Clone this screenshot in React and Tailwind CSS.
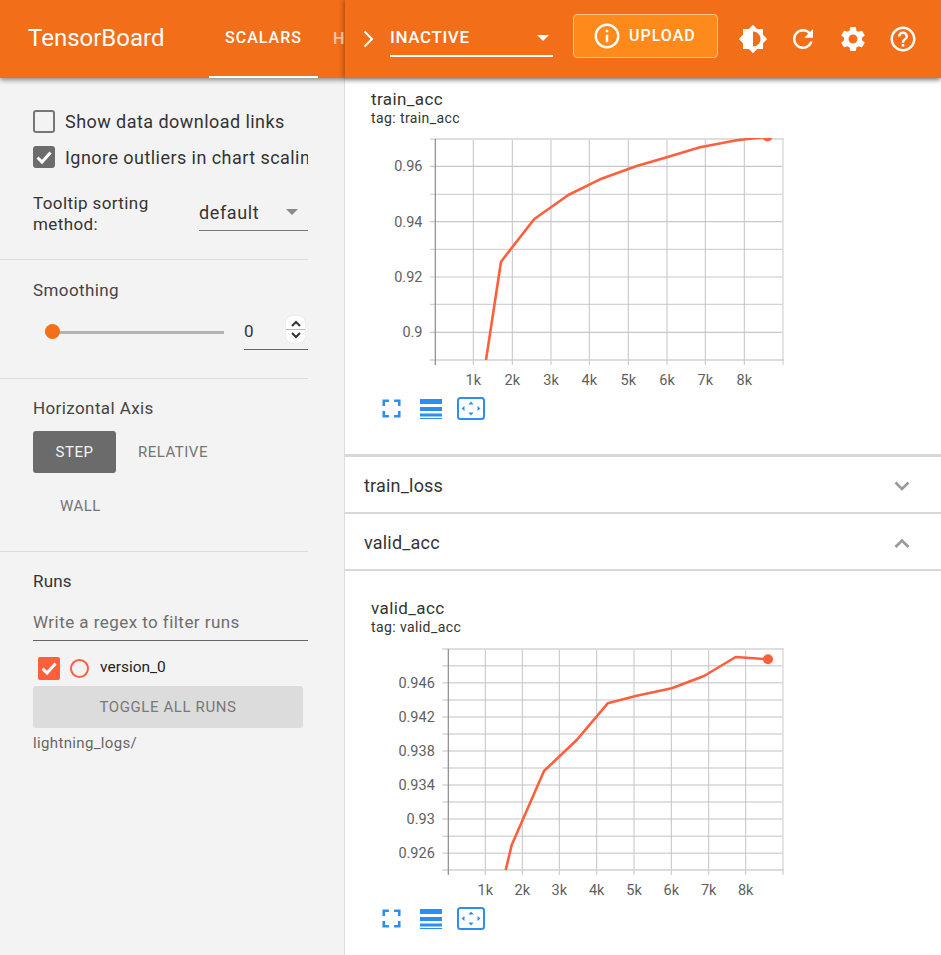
import React from "react";

const I = ({ d, size = 30, className = "" }) => (
  <svg width={size} height={size} viewBox="0 0 24 24" fill="currentColor" className={"block shrink-0 " + className}>
    <path d={d} />
  </svg>
);

const P = {
  info: "M11 17h2v-6h-2v6zm1-15C6.48 2 2 6.48 2 12s4.48 10 10 10 10-4.48 10-10S17.52 2 12 2zm0 18c-4.41 0-8-3.59-8-8s3.59-8 8-8 8 3.59 8 8-3.59 8-8 8zM11 9h2V7h-2v2z",
  bright: "M20 15.31L23.31 12 20 8.69V4h-4.69L12 .69 8.69 4H4v4.69L.69 12 4 15.31V20h4.69L12 23.31 15.31 20H20v-4.69zM12 18V6c3.31 0 6 2.69 6 6s-2.69 6-6 6z",
  refresh: "M17.65 6.35C16.2 4.9 14.21 4 12 4c-4.42 0-7.99 3.58-7.99 8s3.57 8 7.99 8c3.73 0 6.84-2.55 7.73-6h-2.08c-.82 2.33-3.04 4-5.65 4-3.31 0-6-2.69-6-6s2.69-6 6-6c1.66 0 3.14.69 4.22 1.78L13 11h7V4l-2.35 2.35z",
  settings: "M19.14 12.94c.04-.3.06-.61.06-.94 0-.32-.02-.64-.07-.94l2.03-1.58c.18-.14.23-.41.12-.61l-1.92-3.32c-.12-.22-.37-.29-.59-.22l-2.39.96c-.5-.38-1.03-.7-1.62-.94l-.36-2.54c-.04-.24-.24-.41-.48-.41h-3.84c-.24 0-.43.17-.47.41l-.36 2.54c-.59.24-1.13.57-1.62.94l-2.39-.96c-.22-.08-.47 0-.59.22L2.74 8.87c-.12.21-.08.47.12.61l2.03 1.58c-.05.3-.09.63-.09.94s.02.64.07.94l-2.03 1.58c-.18.14-.23.41-.12.61l1.92 3.32c.12.22.37.29.59.22l2.39-.96c.5.38 1.03.7 1.62.94l.36 2.54c.05.24.24.41.48.41h3.84c.24 0 .44-.17.47-.41l.36-2.54c.59-.24 1.13-.56 1.62-.94l2.39.96c.22.08.47 0 .59-.22l1.92-3.32c.12-.22.07-.47-.12-.61l-2.01-1.58zM12 15.6c-1.98 0-3.6-1.62-3.6-3.6s1.62-3.6 3.6-3.6 3.6 1.62 3.6 3.6-1.62 3.6-3.6 3.6z",
  help: "M11 18h2v-2h-2v2zm1-16C6.48 2 2 6.48 2 12s4.48 10 10 10 10-4.48 10-10S17.52 2 12 2zm0 18c-4.41 0-8-3.59-8-8s3.59-8 8-8 8 3.59 8 8-3.59 8-8 8zm0-14c-2.21 0-4 1.79-4 4h2c0-1.1.9-2 2-2s2 .9 2 2c0 2-3 1.75-3 5h2c0-2.25 3-2.5 3-5 0-2.21-1.79-4-4-4z",
  full: "M7 14H5v5h5v-2H7v-3zm-2-4h2V7h3V5H5v5zm12 7h-3v2h5v-5h-2v3zM14 5v2h3v3h2V5h-5z",
};

const Check = () => (
  <svg width="22" height="22" viewBox="0 0 22 22" className="block">
    <path d="M4.5 11.5l4.5 4.5 8.5-9.5" fill="none" stroke="#fff" strokeWidth="3" />
  </svg>
);

const chart1 = {
  top: 139, bottom: 360, left: 435.3, tickLeft: 430, right: 783,
  xs: [[473.3, "1k"], [512.3, "2k"], [551, "3k"], [589.3, "4k"], [628.3, "5k"], [667, "6k"], [705.3, "7k"], [744.3, "8k"]],
  ys: [[166.3, "0.96"], [194.3], [221.7, "0.94"], [249.3], [277, "0.92"], [304.3], [332.3, "0.9"]],
  thick: false,
  line: "486,360 501,261.7 534.3,219 568.3,195 600,179.3 636.7,166 666.7,157.3 700,147.3 736.7,140.3 766.7,137",
  dot: [767.5, 136.5],
};
const chart2 = {
  top: 649, bottom: 870, left: 448.3, tickLeft: 442.3, right: 783,
  xs: [[485.3, "1k"], [522.3, "2k"], [559.3, "3k"], [596.7, "4k"], [634, "5k"], [671.3, "6k"], [708.7, "7k"], [745.7, "8k"]],
  ys: [[665.7], [682.7, "0.946"], [700], [717, "0.942"], [734], [751, "0.938"], [768], [785, "0.934"], [802], [819, "0.93"], [836.3], [853.3, "0.926"]],
  thick: true,
  line: "505.7,870 511.7,845 544,771 576.7,740 607.7,703.3 636.7,695.7 671.7,688.3 704,676 735.7,657 768,659.3",
  dot: [768, 659.3],
};

const Chart = ({ c }) => {
  const clip = "clip" + c.top;
  return (
    <svg width="420" height="259" viewBox={`371 ${c.top - 5} 420 259`} className="block" style={{ fontFamily: "Roboto, sans-serif" }}>
      <defs>
        <clipPath id={clip}>
          <rect x={c.left} y={c.top - 1} width={c.right - c.left} height={c.bottom - c.top + 1} />
        </clipPath>
      </defs>
      {c.ys.map(([y, l], i) => (
        <g key={i}>
          <line x1={c.tickLeft} x2={c.right} y1={y} y2={y} stroke={c.thick ? "#d6d6d6" : "#c8c8c8"} strokeWidth={c.thick ? (l ? 1.6 : 1.4) : l ? 1.2 : 1} />
          {l && <text x={c.tickLeft - 7.5} y={y + 5} textAnchor="end" fontSize="14.5" fill="#5f5f5f">{l}</text>}
        </g>
      ))}
      {c.xs.map(([x, l], i) => (
        <g key={i}>
          <line x1={x} x2={x} y1={c.top} y2={c.bottom + 5} stroke="#c4c4c4" strokeWidth="1" />
          <text x={x} y={c.bottom + 25} textAnchor="middle" fontSize="14.5" fill="#5f5f5f">{l}</text>
        </g>
      ))}
      <line x1={c.tickLeft} x2={c.right + 1} y1={c.top} y2={c.top} stroke="#dedede" strokeWidth="2" />
      <line x1={c.right} x2={c.right} y1={c.top} y2={c.bottom + 5} stroke="#dedede" strokeWidth="1.6" />
      <line x1={c.tickLeft} x2={c.right + 1} y1={c.bottom} y2={c.bottom} stroke="#d0d0d0" strokeWidth="1.6" />
      <line x1={c.left} x2={c.left} y1={c.top} y2={c.bottom + 5} stroke="#8a8a8a" strokeWidth="1.2" />
      <g clipPath={`url(#${clip})`}>
        <polyline points={c.line} fill="none" stroke="#ff5f3c" strokeWidth="2.6" strokeLinejoin="round" />
        <circle cx={c.dot[0]} cy={c.dot[1]} r="5" fill="#ff5f3c" />
      </g>
    </svg>
  );
};

const ChartButtons = () => (
  <div className="flex items-center text-[#2b8ff0]">
    <I d={P.full} size={31} className="ml-[4.5px]" />
    <svg width="22" height="20" viewBox="0 0 22 20" className="block ml-[13.5px]" fill="currentColor">
      <rect x="0" y="0" width="22" height="5" />
      <rect x="0" y="8" width="22" height="4" />
      <rect x="0" y="14.5" width="22" height="3" />
      <rect x="0" y="19" width="22" height="1" />
    </svg>
    <svg width="28" height="23" viewBox="0 0 28 23" className="block ml-[15px]" fill="currentColor">
      <rect x="1" y="1" width="26" height="21" rx="2.5" fill="none" stroke="currentColor" strokeWidth="2" />
      <path d="M14 4.500l2.600 3h-5.200zM14 18.500l-2.600-3h5.200zM4.500 11.500l3-2.600v5.200zM23.500 11.500l-3 2.600v-5.200z" />
    </svg>
  </div>
);

const ChartCard = ({ title, c, tagClass }) => (
  <div className="bg-white pl-[26px]">
    <div className="text-[17px] leading-[20px] tracking-[0.4px] text-[#333]">{title}</div>
    <div className={"text-[14px] leading-[16px] tracking-[0.4px] text-[#333] mt-[1px] " + tagClass}>tag: {title}</div>
    <Chart c={c} />
    <ChartButtons />
  </div>
);

const Accordion = ({ label, open }) => (
  <div className="h-[55px] bg-white flex items-center justify-between pl-[19px] pr-[30px] pt-[2px]">
    <span className="text-[18px] tracking-[0.2px] text-[#333]">{label}</span>
    <svg width="18" height="12" viewBox="0 0 18 12" className="block">
      <path d={open ? "M2.500 10L9 3.500 15.500 10" : "M2.500 2.500L9 9 15.500 2.500"} fill="none" stroke="#9a9a9a" strokeWidth="2.600" />
    </svg>
  </div>
);

export default function App() {
  return (
    <div className="w-[941px] h-[955px] overflow-hidden flex flex-col bg-[#d8d8d8] font-['Roboto',sans-serif]">
      <header className="relative z-10 h-[78px] shrink-0 bg-[#f26e18] text-white flex shadow-[0_2px_5px_rgba(0,0,0,0.45)]">
        <div className="w-[345px] shrink-0 overflow-hidden flex items-center pl-[28px] whitespace-nowrap">
          <span className="text-[24px] w-[181px] shrink-0 mb-[2px]">TensorBoard</span>
          <div className="h-[78px] w-[109px] shrink-0 flex items-center justify-center border-b-[2px] border-white text-[16px] font-medium tracking-[1px]">SCALARS</div>
          <span className="ml-[15px] text-[16px] font-medium opacity-60">H</span>
        </div>
        <div className="flex-1 flex items-center pl-[17px] shadow-[-2px_0_4px_rgba(0,0,0,0.25)]">
          <svg width="14" height="20" viewBox="0 0 14 20" className="block">
            <path d="M2.500 2.500L10 10 2.500 17.500" fill="none" stroke="#fff" strokeWidth="2" />
          </svg>
          <div className="ml-[14px] w-[163px] h-[38px] mb-[2px] pt-[1px] flex items-center justify-between border-b-[2px] border-white text-[17px] font-medium tracking-[0.6px] pr-[3px]">
            <span>INACTIVE</span>
            <span className="w-0 h-0 border-x-[6px] border-x-transparent border-t-[6px] border-t-white mr-[1px]" />
          </div>
          <button className="ml-[20px] mb-[6px] w-[145px] h-[44px] bg-[#ff8a1c] border border-[#ffc48a] rounded-[4px] flex items-center pl-[18px] text-[16px] font-medium tracking-[1px]">
            <I d={P.info} size={30} />
            <span className="ml-[7px]">UPLOAD</span>
          </button>
          <div className="ml-[20px] flex gap-[20px]">
            <I d={P.bright} />
            <I d={P.refresh} />
            <I d={P.settings} />
            <I d={P.help} />
          </div>
        </div>
      </header>

      <div className="flex-1 flex min-h-0">
        <aside className="w-[345px] shrink-0 bg-[#f3f3f3] border-r border-[#dcdcdc] text-[#444]">
          <section className="w-[308px] h-[182px] border-b border-[#dcdcdc] pl-[33px] pt-[31px]">
            <div className="flex items-center h-[24px] gap-[10px] text-[18px] tracking-[0.45px] whitespace-nowrap">
              <span className="w-[22px] h-[23px] shrink-0 border-2 border-[#777] rounded-[3px]" />
              <span className="text-[#333]">Show data download links</span>
            </div>
            <div className="flex items-center h-[24px] mt-[12px] gap-[10px] text-[18px] tracking-[0.45px] whitespace-nowrap overflow-hidden">
              <span className="w-[22px] h-[22px] shrink-0 bg-[#6c6c6c] rounded-[3px]"><Check /></span>
              <span className="text-[#333]">Ignore outliers in chart scaling</span>
            </div>
            <div className="flex mt-[24px] h-[42px] items-start">
              <div className="w-[166px] text-[17px] leading-[21px] tracking-[0.4px] text-[#333]">Tooltip sorting<br />method:</div>
              <div className="w-[109px] h-[45px] mt-[-7px] pt-[8px] border-b border-[#777] flex items-center justify-between pr-[10px] text-[18px] tracking-[0.6px] text-[#333]">
                <span>default</span>
                <span className="w-0 h-0 border-x-[6px] border-x-transparent border-t-[6px] border-t-[#8a8a8a]" />
              </div>
            </div>
          </section>

          <section className="w-[308px] h-[119px] border-b border-[#dcdcdc] pl-[33px] pt-[19px]">
            <div className="text-[17px] leading-[22px] tracking-[0.4px]">Smoothing</div>
            <div className="flex items-start mt-[16px]">
              <div className="relative w-[191px] h-[30px] flex items-center pl-[12px]">
                <div className="h-[3px] w-[179px] bg-[#b3b3b3]" />
                <div className="absolute left-[12px] top-[7px] w-[15px] h-[15px] rounded-full bg-[#f36f18]" />
              </div>
              <div className="w-[64px] h-[34px] ml-[20px] border-b border-[#666] mt-[-1px] flex justify-between pr-[3px]">
                <span className="text-[17px] text-[#333] mt-[3px]">0</span>
                <div className="w-[19px] h-[27px] bg-white rounded-[6px] flex flex-col items-center justify-center shadow-[0_0_1px_rgba(0,0,0,0.2)]">
                  <svg width="12" height="10" viewBox="0 0 12 10" className="block"><path d="M2 7l4-4 4 4" fill="none" stroke="#333" strokeWidth="2" /></svg>
                  <div className="w-full h-px bg-[#bbb]" />
                  <svg width="12" height="10" viewBox="0 0 12 10" className="block"><path d="M2 3l4 4 4-4" fill="none" stroke="#333" strokeWidth="2" /></svg>
                </div>
              </div>
            </div>
          </section>

          <section className="w-[308px] h-[173px] border-b border-[#dcdcdc] pl-[33px] pt-[18px]">
            <div className="text-[17px] leading-[22px] tracking-[0.4px]">Horizontal Axis</div>
            <div className="flex flex-wrap mt-[12px] text-[15px] tracking-[0.5px]">
              <div className="w-[83px] h-[42px] bg-[#6b6b6b] text-[#f3f3f3] rounded-[3px] flex items-center justify-center">STEP</div>
              <div className="h-[42px] ml-[22px] flex items-center text-[#757575]">RELATIVE</div>
              <div className="w-full h-[42px] mt-[12px] pl-[27px] flex items-center text-[#757575]">WALL</div>
            </div>
          </section>

          <section className="w-[308px] pl-[33px] pt-[18px]">
            <div className="text-[17px] leading-[22px] tracking-[0.2px] text-[#333]">Runs</div>
            <div className="h-[38px] mt-[11px] flex items-start pt-[7px] border-b border-[#666] text-[17px] tracking-[0.45px] text-[#6e6e6e]">Write a regex to filter runs</div>
            <div className="flex items-center h-[24px] mt-[15px] ml-[5px]">
              <span className="w-[22px] h-[23px] bg-[#ff5f3c] rounded-[2px]"><Check /></span>
              <span className="w-[19px] h-[19px] ml-[10px] rounded-full border-2 border-[#ff5f3c]" />
              <span className="ml-[11px] text-[15.5px] text-[#222]">version_0</span>
            </div>
            <div className="w-[270px] h-[42px] mt-[6px] bg-[#dcdcdc] rounded-[3px] flex items-center justify-center text-[15px] tracking-[0.6px] text-[#787878]">TOGGLE ALL RUNS</div>
            <div className="mt-[5px] text-[15px] leading-[20px] tracking-[0.35px] text-[#666]">lightning_logs/</div>
          </section>
        </aside>

        <main className="flex-1 min-w-0 flex flex-col">
          <div className="h-[376px] shrink-0 bg-white pt-[11px]">
            <ChartCard title="train_acc" c={chart1} tagClass="mb-[8px]" />
          </div>
          <div className="h-[3px] shrink-0" />
          <Accordion label="train_loss" />
          <div className="h-[2px] shrink-0" />
          <Accordion label="valid_acc" open />
          <div className="h-[2px] shrink-0" />
          <div className="flex-1 bg-white pt-[27px] overflow-hidden">
            <ChartCard title="valid_acc" c={chart2} tagClass="mb-[9px]" />
          </div>
        </main>
      </div>
    </div>
  );
}
